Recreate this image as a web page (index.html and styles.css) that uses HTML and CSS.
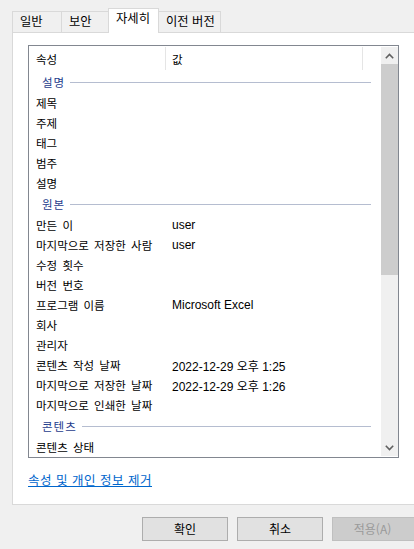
FILE: index.html
```html
<!DOCTYPE html>
<html lang="ko">
<head>
<meta charset="utf-8">
<title>속성</title>
<link rel="stylesheet" href="styles.css">
</head>
<body>
<div class="window">
  <div class="tabs">
    <div class="tab t1">일반</div>
    <div class="tab t2">보안</div>
    <div class="tab t3 selected">자세히</div>
    <div class="tab t4">이전 버전</div>
  </div>
  <div class="panel">
    <div class="listbox">
      <div class="list">
        <div class="header">
          <div class="hcell hprop">속성</div>
          <div class="hcell hval">값</div>
          <div class="hcell hrest"></div>
        </div>
        <div class="group"><span class="glabel">설명</span><span class="gline"></span></div>
        <div class="row"><span class="prop">제목</span></div>
        <div class="row"><span class="prop">주제</span></div>
        <div class="row"><span class="prop">태그</span></div>
        <div class="row"><span class="prop">범주</span></div>
        <div class="row"><span class="prop">설명</span></div>
        <div class="group"><span class="glabel">원본</span><span class="gline"></span></div>
        <div class="row"><span class="prop">만든 이</span><span class="val">user</span></div>
        <div class="row"><span class="prop">마지막으로 저장한 사람</span><span class="val">user</span></div>
        <div class="row"><span class="prop">수정 횟수</span></div>
        <div class="row"><span class="prop">버전 번호</span></div>
        <div class="row"><span class="prop">프로그램 이름</span><span class="val">Microsoft Excel</span></div>
        <div class="row"><span class="prop">회사</span></div>
        <div class="row"><span class="prop">관리자</span></div>
        <div class="row"><span class="prop">콘텐츠 작성 날짜</span><span class="val">2022-12-29 오후 1:25</span></div>
        <div class="row"><span class="prop">마지막으로 저장한 날짜</span><span class="val">2022-12-29 오후 1:26</span></div>
        <div class="row"><span class="prop">마지막으로 인쇄한 날짜</span></div>
        <div class="group"><span class="glabel">콘텐츠</span><span class="gline"></span></div>
        <div class="row"><span class="prop">콘텐츠 상태</span></div>
      </div>
      <div class="scrollbar">
        <div class="sbtn">
          <svg width="9" height="6" viewBox="0 0 9 6"><path d="M0.8 5.2 L4.5 1.5 L8.2 5.2" fill="none" stroke="#606060" stroke-width="1.6"/></svg>
        </div>
        <div class="thumb"></div>
        <div class="track"></div>
        <div class="sbtn">
          <svg width="9" height="6" viewBox="0 0 9 6"><path d="M0.8 0.8 L4.5 4.5 L8.2 0.8" fill="none" stroke="#606060" stroke-width="1.6"/></svg>
        </div>
      </div>
    </div>
    <a class="link" href="#">속성 및 개인 정보 제거</a>
  </div>
  <div class="buttons">
    <div class="btn">확인</div>
    <div class="btn">취소</div>
    <div class="btn disabled">적용(A)</div>
  </div>
</div>
</body>
</html>
```

FILE: styles.css
```css
html, body {
  margin: 0;
  padding: 0;
}
body {
  background: #f0f0f0;
  width: 414px;
  height: 549px;
  overflow: hidden;
  font-family: "Noto Sans CJK KR", "Liberation Sans", sans-serif;
  font-size: 11.5px;
  color: #000;
}
.window {
  padding-top: 8px;
  width: 414px;
}
.tabs {
  display: flex;
  align-items: flex-end;
  height: 24px;
  margin-left: 12px;
  position: relative;
  z-index: 2;
}
.tab {
  box-sizing: border-box;
  height: 21px;
  border: 1px solid #d9d9d9;
  border-bottom: none;
  background: #f0f0f0;
  font-size: 12.3px;
  line-height: 19px;
  padding-left: 7px;
  margin-right: -1px;
}
.t1 { width: 50px; }
.t2 { width: 48px; }
.t3 { width: 51px; }
.t4 { width: 63px; }
.tab.selected {
  height: 25px;
  margin-bottom: -1px;
  background: #fff;
  line-height: 18px;
  position: relative;
  z-index: 3;
}
.panel {
  box-sizing: border-box;
  margin-left: 12px;
  height: 473px;
  width: 402px;
  background: #fff;
  border: 1px solid #d9d9d9;
  border-right: none;
  padding: 12px 0 0 15px;
}
.listbox {
  box-sizing: border-box;
  width: 371px;
  height: 413px;
  border: 1px solid #828790;
  display: flex;
  overflow: hidden;
}
.list {
  width: 352px;
  flex: none;
  overflow: hidden;
}
.header {
  display: flex;
  height: 24px;
  margin-top: 1px;
}
.hcell {
  box-sizing: border-box;
  line-height: 24px;
  height: 23px;
  border-right: 1px solid #e5e5e5;
}
.hprop {
  width: 137px;
  padding-left: 7px;
}
.hval {
  width: 197px;
  padding-left: 6px;
}
.hrest {
  border-right: none;
}
.group {
  display: flex;
  align-items: center;
  height: 22px;
  padding-left: 13px;
  padding-right: 10px;
}
.glabel {
  color: #1e3c8c;
  letter-spacing: 1px;
}
.gline {
  flex: 1;
  height: 1px;
  background: #b5bdd0;
  margin-left: 5px;
}
.row {
  display: flex;
  align-items: center;
  height: 20px;
  padding-left: 7px;
}
.prop {
  width: 136px;
  flex: none;
  white-space: nowrap;
  word-spacing: 2px;
}
.val {
  font-family: "Liberation Sans", "Noto Sans CJK KR", sans-serif;
  font-size: 12px;
  white-space: nowrap;
}
.scrollbar {
  width: 17px;
  flex: none;
  margin-top: 1px;
  margin-bottom: 1px;
  background: #f0f0f0;
  display: flex;
  flex-direction: column;
}
.sbtn {
  height: 17px;
  display: flex;
  align-items: center;
  justify-content: center;
  flex: none;
}
.thumb {
  height: 211px;
  background: #cdcdcd;
  flex: none;
}
.track {
  flex: 1;
}
.link {
  display: inline-block;
  margin-top: 12px;
  color: #0066cc;
  font-size: 12.5px;
  text-decoration: underline;
  letter-spacing: 0.5px;
}
.buttons {
  display: flex;
  gap: 9px;
  margin-top: 12px;
  padding-left: 142px;
}
.btn {
  box-sizing: border-box;
  width: 86px;
  height: 24px;
  background: #e1e1e1;
  border: 1px solid #adadad;
  text-align: center;
  line-height: 21px;
  font-size: 12px;
  flex: none;
}
.btn.disabled {
  width: 83px;
  background: #cccccc;
  border-color: #bfbfbf;
  border-right: none;
  padding-right: 3px;
  color: #9a9a9a;
}
```
